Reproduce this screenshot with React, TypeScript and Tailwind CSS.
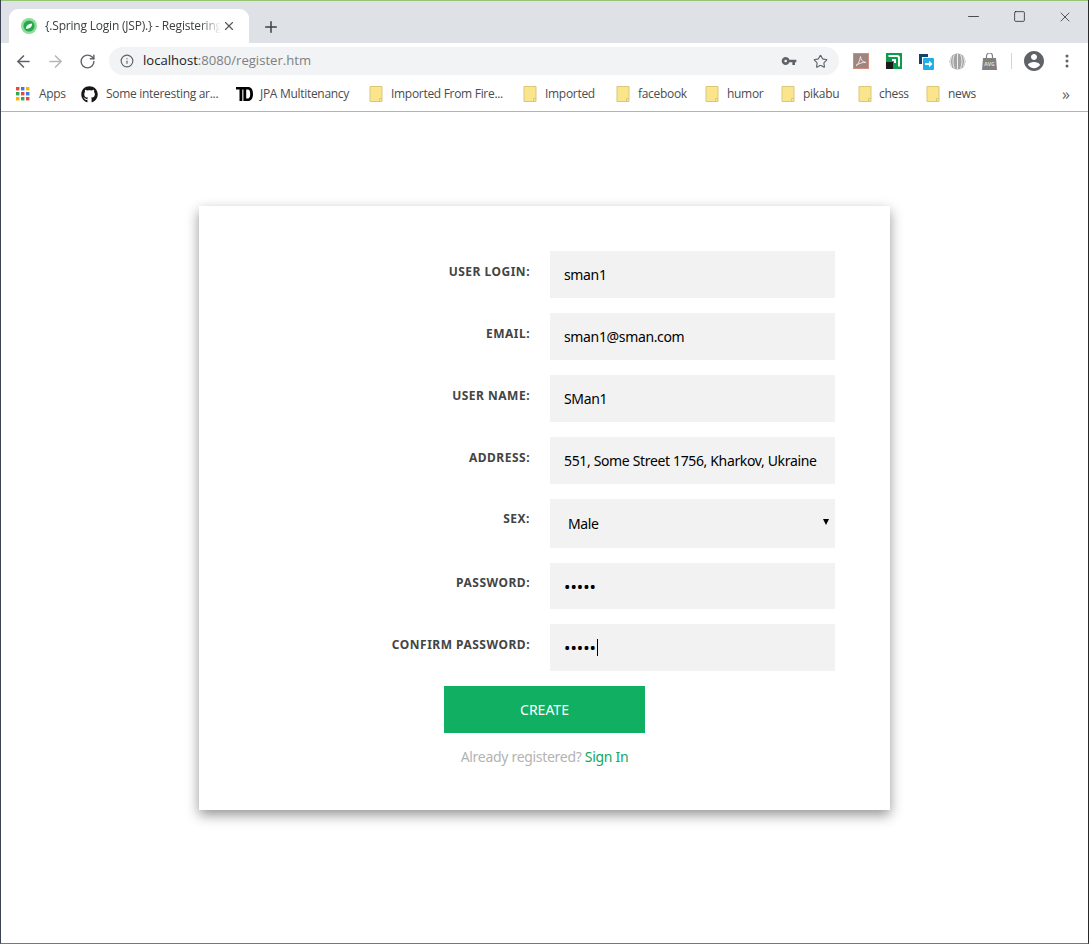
import React from "react";
import { ArrowLeft, ArrowRight, RotateCw, Info, Star, Plus, X, Minus, Square } from "lucide-react";
import { FaGithub } from "react-icons/fa";

const Folder = () => (
  <svg width="14" height="16" viewBox="0 0 14 16" className="shrink-0">
    <path d="M1 .5h12v15H1z" fill="#fbe58c" stroke="#d9c77a" />
    <path d="M10.500 15.500v-3h2.500" fill="none" stroke="#d9c77a" />
  </svg>
);

const Apps = () => {
  const colors = ["#e8453c", "#3b78e7", "#f4b400", "#34a853", "#e8453c", "#3b78e7", "#f4b400", "#34a853", "#e8453c"];
  return (
    <svg width="14" height="14" viewBox="0 0 14 14" className="shrink-0">
      {colors.map((c, i) => (
        <rect key={i} x={(i % 3) * 5} y={Math.floor(i / 3) * 5} width="3.400" height="3.400" fill={c} />
      ))}
    </svg>
  );
};

const TdLogo = () => (
  <svg width="17" height="14" viewBox="0 0 17 14" className="shrink-0">
    <path d="M0 0h12c3.200 0 5 2.400 5 7s-2 7-5 7H7.400V2.400H6.300V14H3.500V2.400H0zM10.200 2.600v8.800h1.500c1.700 0 2.500-1.400 2.500-4.400s-.8-4.400-2.500-4.400z" fill="#000" fillRule="evenodd" />
  </svg>
);

const Bookmark = ({ children, label, className }: { children: React.ReactNode; label: string; className: string }) => (
  <div className={`flex items-center shrink-0 ${className}`}>
    {children}
    <span className="whitespace-nowrap text-[12px] tracking-[-0.3px] text-[#4a4c50]">{label}</span>
  </div>
);

const Field = ({ label, value, inputClass = "text-[14px] tracking-[-0.35px]", type = "text", rowClass = "h-[47px] mb-[15px]", labelClass = "pt-[12px]", caret = false }: { label: string; value: string; inputClass?: string; type?: string; rowClass?: string; labelClass?: string; caret?: boolean }) => (
  <div className={`flex ${rowClass}`}>
    <label className={`w-[331px] ${labelClass} text-right text-[12px] leading-[17px] font-bold tracking-[0.5px] text-[#444444]`}>{label}:</label>
    <div className="relative ml-[20px] w-[285px] h-full">
      <input
        readOnly
        type={type}
        value={value}
        className={`w-full h-full bg-[#f2f2f2] px-[14px] text-black outline-none font-['Noto_Sans',sans-serif] ${inputClass}`}
      />
      {caret && <span className="absolute left-[47px] top-[15px] h-[17px] w-px bg-black" />}
    </div>
  </div>
);

export default function App() {
  return (
    <div className="h-[944px] w-[1089px] overflow-hidden bg-white flex flex-col border-l border-l-[#3a4454] border-r border-r-[#2a2a2a] border-b border-b-[#777777] font-['Open_Sans',sans-serif]">
      {/* tab strip */}
      <div className="h-[43px] shrink-0 bg-[#dee1e6] border-t border-t-[#93c572] flex items-end relative">
        <div className="ml-[8px] w-[240px] h-[34px] bg-white rounded-t-[9px] flex items-center pl-[12px]">
          <svg width="16" height="16" viewBox="0 0 16 16" className="shrink-0">
            <circle cx="8" cy="8" r="8" fill="#8fdc9a" />
            <circle cx="8" cy="8" r="5.500" fill="#22a94a" />
            <path d="M4.800 10.800c.2-3.400 2.600-5.200 6.400-5.400-.2 3.400-2.400 5.400-6.400 5.400z" fill="#fff" />
          </svg>
          <span className="ml-[8px] w-[176px] overflow-hidden whitespace-nowrap text-[12px] tracking-[-0.2px] text-[#3c4043] [mask-image:linear-gradient(to_right,black_88%,transparent)]">
            {"{.Spring Login (JSP).} - Registering"}
          </span>
          <X size={14} strokeWidth={2} className="ml-[1px] text-[#55585c]" />
        </div>
        <Plus size={18} strokeWidth={2} className="ml-[13px] mb-[7px] text-[#3c4043]" />
        <div className="ml-auto self-start mt-[7px] flex items-center text-[#222222]">
          <Minus size={17} strokeWidth={1.1} className="mr-[31px]" />
          <Square size={13} strokeWidth={1.4} className="mr-[31px]" />
          <X size={16} strokeWidth={1.1} className="mr-[15px]" />
        </div>
      </div>

      {/* toolbar */}
      <div className="h-[36px] shrink-0 bg-white flex items-center">
        <ArrowLeft size={19} strokeWidth={2} className="ml-[13px] text-[#5f6368]" />
        <ArrowRight size={19} strokeWidth={2} className="ml-[13px] text-[#b4b6b9]" />
        <RotateCw size={17} strokeWidth={2} className="ml-[14px] text-[#5f6368]" />
        <div className="ml-[13px] w-[730px] h-[28px] rounded-full bg-[#f1f3f4] flex items-center pl-[11px]">
          <Info size={14} strokeWidth={2} className="text-[#5f6368]" />
          <span className="ml-[9px] text-[13.1px] text-[#202124]">localhost<span className="text-[#7d8084]">:8080/register.htm</span></span>
          <svg width="16" height="16" viewBox="0 0 24 24" fill="#5f6368" className="ml-auto">
            <path d="M12.650 10C11.830 7.670 9.610 6 7 6c-3.310 0-6 2.690-6 6s2.690 6 6 6c2.610 0 4.830-1.670 5.650-4H17v4h4v-4h2v-4H12.650zM7 14c-1.100 0-2-.9-2-2s.9-2 2-2 2 .9 2 2-.9 2-2 2z" />
          </svg>
          <Star size={15} strokeWidth={1.8} className="ml-[16px] mr-[11px] text-[#5f6368]" />
        </div>
        {/* extensions */}
        <svg width="16" height="16" viewBox="0 0 16 16" className="ml-[14px]">
          <rect x=".5" y=".5" width="15" height="15" fill="#9e8680" stroke="#d08f7c" />
          <path d="M3 12.500c2-1 3.500-4 4.500-9 .3 3.500 2 5.500 5.500 6-3.500-.3-6 .5-10 3z" fill="none" stroke="#f3e6e2" strokeWidth="1" />
        </svg>
        <svg width="16" height="16" viewBox="0 0 16 16" className="ml-[17px]">
          <rect width="16" height="16" fill="#0d9b4c" />
          <path d="M2.500 3H11a2 2 0 0 1 2 2v8.500" fill="none" stroke="#fff" strokeWidth="2" />
          <path d="M6 7h3v3" fill="none" stroke="#fff" strokeWidth="2" />
          <rect y="9" width="7" height="7" fill="#1b1b1b" />
        </svg>
        <svg width="17" height="17" viewBox="0 0 17 17" className="ml-[16px]">
          <path d="M1 1h9v3H4v7H1z" fill="#12436d" />
          <rect x="5" y="5" width="11" height="12" rx="1" fill="#21aee6" />
          <path d="M7 10h4V7.800l3.500 3.200-3.500 3.200V12H7z" fill="#fff" />
        </svg>
        <svg width="17" height="17" viewBox="0 0 17 17" className="ml-[14px]">
          <circle cx="8.500" cy="8.500" r="8" fill="#a3a3a3" />
          <path d="M8.500 1v15M5.500 1.500C3.500 5 3.500 12 5.500 15.500M11.500 1.500c2 3.500 2 10.500 0 14M2.700 3.500C1 7 1 10 2.700 13.500M14.300 3.500c1.700 3.500 1.700 6.500 0 10" stroke="#eeeeee" strokeWidth="1" fill="none" />
        </svg>
        <svg width="15" height="17" viewBox="0 0 15 17" className="ml-[16px]">
          <path d="M1 5h13l1 12H0z" fill="#808080" />
          <path d="M4.500 6V3a3 3 0 0 1 6 0v3" fill="none" stroke="#808080" strokeWidth="1.200" />
          <text x="7.500" y="13" textAnchor="middle" fontSize="5" fontWeight="700" fill="#dddddd">AVG</text>
        </svg>
        <div className="ml-[14px] w-px h-[16px] bg-[#d3d5d8]" />
        <svg width="20" height="20" viewBox="2 2 20 20" fill="#5f6368" className="ml-[12px]">
          <path d="M12 2C6.480 2 2 6.480 2 12s4.480 10 10 10 10-4.480 10-10S17.520 2 12 2zm0 3c1.660 0 3 1.340 3 3s-1.340 3-3 3-3-1.340-3-3 1.340-3 3-3zm0 14.200c-2.500 0-4.710-1.280-6-3.220.030-1.990 4-3.080 6-3.080 1.990 0 5.970 1.090 6 3.080-1.290 1.940-3.500 3.220-6 3.220z" />
        </svg>
        <svg width="4" height="14" viewBox="0 0 4 14" fill="#5f6368" className="ml-[21px]">
          <circle cx="2" cy="2" r="1.500" />
          <circle cx="2" cy="7" r="1.500" />
          <circle cx="2" cy="12" r="1.500" />
        </svg>
      </div>

      {/* bookmarks */}
      <div className="h-[33px] shrink-0 bg-white border-b border-b-[#b4b4b4] flex items-center pl-[15px] pb-[2px]">
        <Bookmark label="Apps" className="w-[65px] gap-[9px]"><Apps /></Bookmark>
        <Bookmark label="Some interesting ar..." className="w-[155px] gap-[8px]"><FaGithub size={17} className="text-[#161614]" /></Bookmark>
        <Bookmark label="JPA Multitenancy" className="w-[133px] gap-[7px]"><TdLogo /></Bookmark>
        <Bookmark label="Imported From Fire..." className="w-[154px] gap-[8px]"><Folder /></Bookmark>
        <Bookmark label="Imported" className="w-[93px] gap-[8px]"><Folder /></Bookmark>
        <Bookmark label="facebook" className="w-[89px] gap-[8px]"><Folder /></Bookmark>
        <Bookmark label="humor" className="w-[76px] gap-[8px]"><Folder /></Bookmark>
        <Bookmark label="pikabu" className="w-[77px] gap-[8px]"><Folder /></Bookmark>
        <Bookmark label="chess" className="w-[68px] gap-[7px]"><Folder /></Bookmark>
        <Bookmark label="news" className="gap-[8px]"><Folder /></Bookmark>
        <span className="ml-auto mr-[18px] text-[16px] leading-none text-[#5f6368]">»</span>
      </div>

      {/* page */}
      <div className="flex-1 pt-[94px] font-['Noto_Sans',sans-serif]">
        <div className="ml-[198px] w-[691px] h-[604px] bg-white shadow-[0_5px_12px_rgba(0,0,0,0.42)] pt-[45px]">
          <Field label="USER LOGIN" value="sman1" />
          <Field label="EMAIL" value="sman1@sman.com" />
          <Field label="USER NAME" value="SMan1" />
          <Field label="ADDRESS" value="551, Some Street 1756, Kharkov, Ukraine" />
          <div className="flex h-[49px] mb-[15px]">
            <label className="w-[331px] pt-[11px] text-right text-[12px] leading-[17px] font-bold tracking-[0.5px] text-[#444444]">SEX:</label>
            <div className="relative ml-[20px] w-[285px] h-full">
              <select defaultValue="Male" className="appearance-none w-full h-full bg-[#f2f2f2] pl-[18px] text-[14px] tracking-[-0.35px] text-black outline-none">
                <option>Male</option>
                <option>Female</option>
              </select>
              <span className="pointer-events-none absolute right-[6px] top-[20px] h-0 w-0 border-x-[3px] border-t-[6px] border-x-transparent border-t-black" />
            </div>
          </div>
          <Field label="PASSWORD" value="12345" type="password" inputClass="text-[17px]" rowClass="h-[46px] mb-[15px]" labelClass="pt-[11px]" />
          <Field label="CONFIRM PASSWORD" value="12345" type="password" inputClass="text-[17px]" caret />
          <button className="block mx-auto w-[201px] h-[47px] bg-[#10af62] text-white text-[14px] uppercase">Create</button>
          <p className="mt-[15px] text-center text-[14px] leading-[18px] tracking-[-0.3px] text-[#b3b3b3]">
            Already registered? <a className="text-[#10a860]">Sign In</a>
          </p>
        </div>
      </div>
    </div>
  );
}
